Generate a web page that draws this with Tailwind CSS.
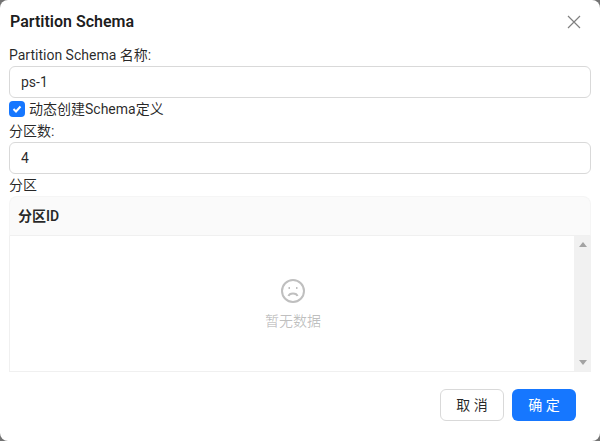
<!DOCTYPE html>
<html lang="zh-CN">
<head>
    <meta charset="UTF-8">
    <title>Partition Schema</title>
    <script src="https://cdn.jsdelivr.net/npm/@tailwindcss/browser@4"></script>
</head>
<body class="bg-[#737373] w-[600px] h-[441px] overflow-hidden font-['Roboto','Noto_Sans_CJK_SC',sans-serif] text-[14px] text-black/85">
    <div class="bg-white rounded-lg w-[600px] h-[441px] flex flex-col">
        <!-- header -->
        <div class="h-[44px] flex items-center justify-between pl-[10px] pr-[18px]">
            <h1 class="text-[16px] leading-[22px] font-semibold text-black/90">Partition Schema</h1>
            <svg class="w-[16px] h-[16px]" viewBox="0 0 16 16" fill="none" stroke="#808080" stroke-width="1.2">
                <path d="M2 2 L14 14 M14 2 L2 14"></path>
            </svg>
        </div>

        <!-- form -->
        <div class="px-[9px] flex flex-col">
            <label class="h-[22px] leading-[22px]">Partition Schema 名称:</label>
            <input type="text" value="ps-1" class="h-[32px] w-full px-[11px] border border-[#d9d9d9] rounded-md text-[14px] outline-none">
            <label class="h-[22px] flex items-center gap-[4px] leading-[22px]">
                <span class="w-[16px] h-[16px] rounded-[4px] bg-[#1677ff] flex items-center justify-center">
                    <svg class="w-[12px] h-[12px]" viewBox="0 0 12 12" fill="none" stroke="#fff" stroke-width="2">
                        <path d="M2.5 6 L5 8.5 L9.5 3.5"></path>
                    </svg>
                </span>
                <span>动态创建Schema定义</span>
            </label>
            <label class="h-[22px] leading-[22px]">分区数:</label>
            <input type="text" value="4" class="h-[32px] w-full px-[11px] border border-[#d9d9d9] rounded-md text-[14px] outline-none">
            <label class="h-[22px] leading-[22px]">分区</label>

            <!-- table -->
            <div class="h-[176px] flex flex-col">
                <div class="h-[40px] bg-[#fafafa] border border-b-[#f0f0f0] border-[#f5f5f5] rounded-t-lg flex items-center px-[8px] font-semibold">分区ID</div>
                <div class="flex-1 flex border-l border-b border-[#f0f0f0]">
                    <div class="flex-1 flex flex-col items-center justify-center pt-[4px] pl-[2px]">
                        <svg class="w-[24px] h-[24px]" viewBox="0 0 24 24" fill="none" stroke="#bfbfbf" stroke-width="2">
                            <circle cx="12" cy="12" r="11"></circle>
                            <path d="M7.5 17 C8.5 13.5 15.5 13.5 16.5 17"></path>
                            <path d="M7.5 9 h1.5 M15 9 h1.5" stroke-width="1.8"></path>
                        </svg>
                        <span class="mt-[7px] text-[14px] leading-[22px] text-black/25">暂无数据</span>
                    </div>
                    <div class="w-[17px] bg-[#f1f1f1] flex flex-col items-center justify-between py-[6px]">
                        <svg class="w-[8px] h-[5px]" viewBox="0 0 8 5" fill="#a3a3a3"><path d="M4 0 L8 5 H0 Z"></path></svg>
                        <svg class="w-[8px] h-[5px]" viewBox="0 0 8 5" fill="#a3a3a3"><path d="M0 0 H8 L4 5 Z"></path></svg>
                    </div>
                </div>
            </div>
        </div>

        <!-- footer -->
        <div class="flex justify-end gap-[8px] pt-[17px] pr-[24px]">
            <button class="w-[64px] h-[32px] bg-white border border-[#d9d9d9] rounded-md">取 消</button>
            <button class="w-[64px] h-[32px] bg-[#1677ff] text-white rounded-md">确 定</button>
        </div>
    </div>
</body>
</html>
